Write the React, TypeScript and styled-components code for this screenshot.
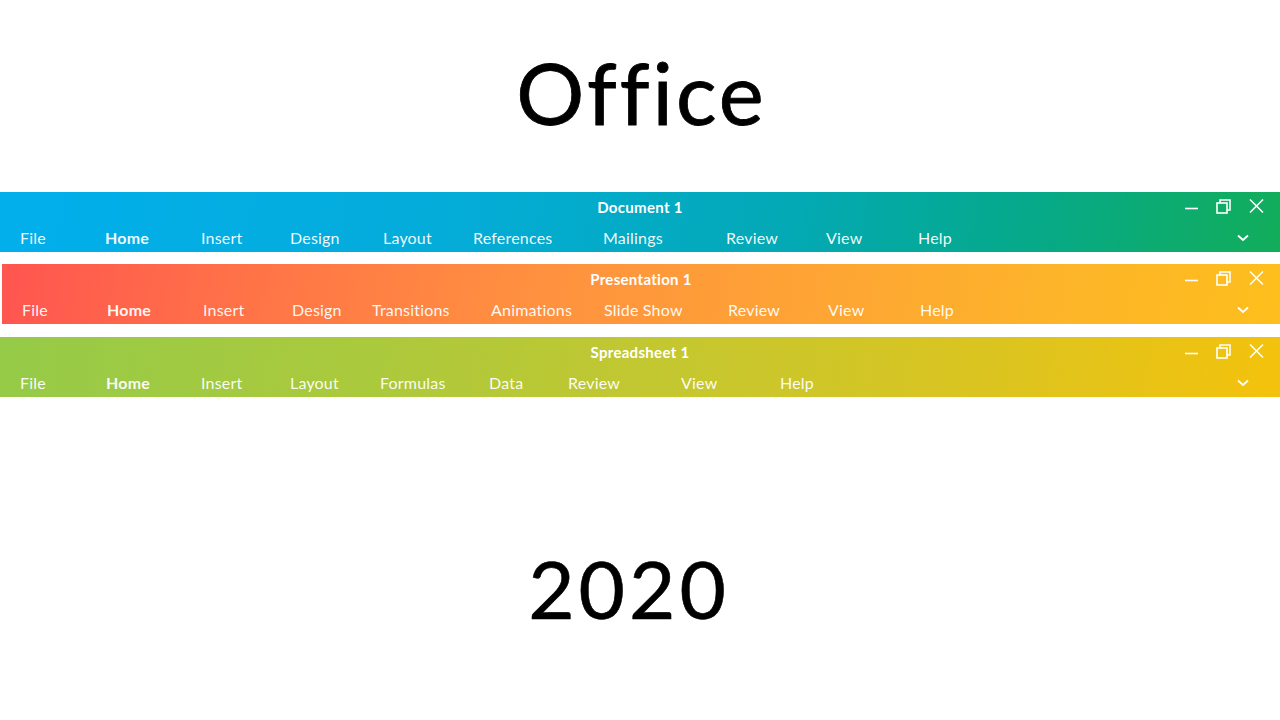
import styled, { createGlobalStyle } from "styled-components";

const GlobalStyle = createGlobalStyle`
  html, body {
    margin: 0;
    padding: 0;
    background: #ffffff;
  }
  body {
    font-family: "Lato", "Liberation Sans", sans-serif;
  }
`;

type Tab = { label: string; w: number; bold?: boolean };

type Ribbon = {
  title: string;
  gradient: string;
  inset: number;
  tabs: Tab[];
};

const ribbons: Ribbon[] = [
  {
    title: "Document 1",
    gradient:
      "linear-gradient(100deg, #02afec 0%, #04acd9 35%, #03a9b4 62%, #06a98a 80%, #12ad5a 100%)",
    inset: 0,
    tabs: [
      { label: "File", w: 85 },
      { label: "Home", w: 96, bold: true },
      { label: "Insert", w: 89 },
      { label: "Design", w: 93 },
      { label: "Layout", w: 90 },
      { label: "References", w: 130 },
      { label: "Mailings", w: 123 },
      { label: "Review", w: 100 },
      { label: "View", w: 92 },
      { label: "Help", w: 60 },
    ],
  },
  {
    title: "Presentation 1",
    gradient:
      "linear-gradient(100deg, #ff5550 0%, #ff7148 18%, #ff8f40 40%, #fea335 62%, #fdb42a 82%, #fdbf1c 100%)",
    inset: 2,
    tabs: [
      { label: "File", w: 85 },
      { label: "Home", w: 96, bold: true },
      { label: "Insert", w: 89 },
      { label: "Design", w: 80 },
      { label: "Transitions", w: 119 },
      { label: "Animations", w: 113 },
      { label: "Slide Show", w: 124 },
      { label: "Review", w: 100 },
      { label: "View", w: 92 },
      { label: "Help", w: 60 },
    ],
  },
  {
    title: "Spreadsheet 1",
    gradient:
      "linear-gradient(100deg, #95cb48 0%, #acc93c 30%, #c7c72e 55%, #dcc41f 78%, #f4c20c 100%)",
    inset: 0,
    tabs: [
      { label: "File", w: 86 },
      { label: "Home", w: 95, bold: true },
      { label: "Insert", w: 89 },
      { label: "Layout", w: 90 },
      { label: "Formulas", w: 109 },
      { label: "Data", w: 79 },
      { label: "Review", w: 113 },
      { label: "View", w: 99 },
      { label: "Help", w: 60 },
    ],
  },
];

const App = () => {
  return (
    <>
      <GlobalStyle />
      <Page>
        <Hero>
          <BigTitle>Office</BigTitle>
        </Hero>
        <Stack>
          {ribbons.map((r) => (
            <Bar key={r.title} $gradient={r.gradient} $inset={r.inset}>
              <TitleRow>
                <span />
                <WindowTitle>{r.title}</WindowTitle>
                <Controls>
                  <ControlIcon viewBox="0 0 16 16">
                    <path d="M3 10.5 H16" />
                  </ControlIcon>
                  <ControlIcon viewBox="0 0 16 16">
                    <rect x="2" y="5" width="10" height="10" />
                    <path d="M5 5 V2 H15 V12 H12" />
                  </ControlIcon>
                  <ControlIcon viewBox="0 0 16 16">
                    <path d="M2 1.5 L15 14.5 M15 1.5 L2 14.5" />
                  </ControlIcon>
                </Controls>
              </TitleRow>
              <MenuRow>
                <Tabs>
                  {r.tabs.map((t) => (
                    <TabItem key={t.label} $w={t.w} $bold={t.bold}>
                      {t.label}
                    </TabItem>
                  ))}
                </Tabs>
                <Chevron viewBox="0 0 14 10">
                  <path d="M2 2.5 L7 7 L12 2.5" />
                </Chevron>
              </MenuRow>
            </Bar>
          ))}
        </Stack>
        <Footer>
          <Year>2020</Year>
        </Footer>
      </Page>
    </>
  );
};

export default App;

const Page = styled.div`
  width: 1280px;
  height: 720px;
  display: flex;
  flex-direction: column;
  overflow: hidden;
  background: #ffffff;
`;

const Hero = styled.div`
  height: 192px;
  display: flex;
  align-items: center;
  justify-content: center;
`;

const BigTitle = styled.h1`
  margin: 0 0 8px 3px;
  font-family: "Lato", "Liberation Sans", sans-serif;
  font-weight: 400;
  font-size: 85px;
  line-height: 1;
  color: #000;
  letter-spacing: 3px;
  -webkit-text-stroke: 0.8px #000;
`;

const Stack = styled.div`
  display: flex;
  flex-direction: column;
  gap: 12px;
`;

const Bar = styled.div<{ $gradient: string; $inset: number }>`
  height: 60px;
  margin-left: ${(p) => p.$inset}px;
  background: ${(p) => p.$gradient};
  color: #fff;
  display: flex;
  flex-direction: column;

  & + & + & {
    margin-top: 1px;
  }
`;

const TitleRow = styled.div`
  height: 30px;
  display: grid;
  grid-template-columns: 1fr auto 1fr;
  align-items: center;
`;

const WindowTitle = styled.div`
  font-weight: 700;
  font-size: 15px;
  letter-spacing: 0.3px;
  color: #fff;
`;

const Controls = styled.div`
  justify-self: end;
  display: flex;
  gap: 17px;
  padding-right: 16px;
  margin-top: -2px;
`;

const ControlIcon = styled.svg`
  width: 16px;
  height: 16px;
  fill: none;
  stroke: #ffffff;
  stroke-width: 1.6;
`;

const MenuRow = styled.div`
  height: 30px;
  display: flex;
  align-items: center;
  justify-content: space-between;
  padding: 0 30px 0 20px;
`;

const Tabs = styled.div`
  display: flex;
  align-items: center;
`;

const TabItem = styled.div<{ $w: number; $bold?: boolean }>`
  width: ${(p) => p.$w}px;
  font-size: 16px;
  font-weight: ${(p) => (p.$bold ? 700 : 400)};
  letter-spacing: 0.2px;
  color: rgba(255, 255, 255, 0.94);
  white-space: nowrap;
`;

const Chevron = styled.svg`
  width: 14px;
  height: 10px;
  fill: none;
  stroke: #ffffff;
  stroke-width: 1.8;
  margin-top: 2px;
`;

const Footer = styled.div`
  flex: 1;
  display: flex;
  justify-content: center;
  padding-top: 151px;
`;

const Year = styled.div`
  font-family: "Lato", "Liberation Sans", sans-serif;
  font-size: 80px;
  line-height: 1;
  letter-spacing: 4px;
  color: #000;
  margin-left: -22px;
  -webkit-text-stroke: 0.6px #000;
`;
